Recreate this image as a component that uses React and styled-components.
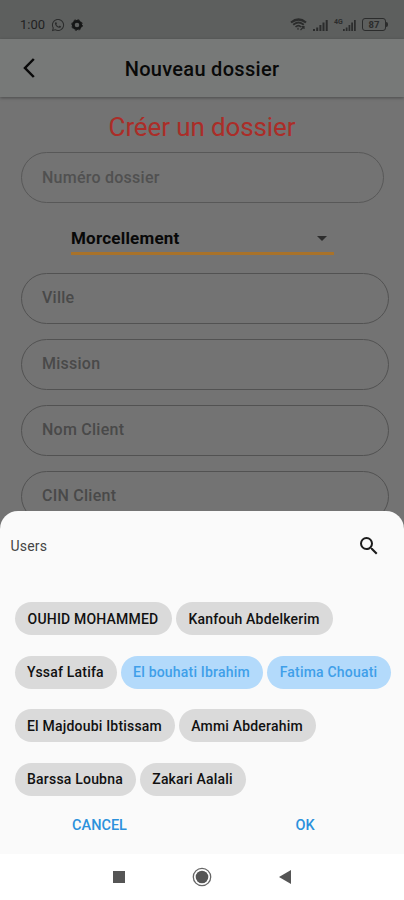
import React, { useState } from "react";
import styled, { createGlobalStyle, css } from "styled-components";
import { FaWhatsapp } from "react-icons/fa";
import { MdSearch } from "react-icons/md";

const fields = ["Ville", "Mission", "Nom Client", "CIN Client"];

/* users are laid out line by line in the sheet */
const userRows = [
  [
    { name: "OUHID MOHAMMED", width: 157 },
    { name: "Kanfouh Abdelkerim", width: 157 },
  ],
  [
    { name: "Yssaf Latifa", width: 102 },
    { name: "El bouhati Ibrahim", width: 142 },
    { name: "Fatima Chouati", width: 124 },
  ],
  [
    { name: "El Majdoubi Ibtissam", width: 160 },
    { name: "Ammi Abderahim", width: 137 },
  ],
  [
    { name: "Barssa Loubna", width: 121 },
    { name: "Zakari Aalali", width: 106 },
  ],
];

const GearIcon = () => (
  <svg width="12" height="12" viewBox="0 0 12 12" fill="none" stroke="#151616">
    <circle cx="6" cy="6" r="3.7" strokeWidth="2.8" />
    <circle cx="6" cy="6" r="5.3" strokeWidth="1" strokeDasharray="2.1 2.06" />
  </svg>
);

const SignalIcon = ({ width = 15 }) => (
  <svg
    width={width}
    height="12"
    viewBox="0 0 15 12"
    preserveAspectRatio="none"
    fill="#2b2c2c"
  >
    <path d="M0 10h2v2H0zM3.2 8.500h2V12h-2zM6.400 6h2v6h-2zM9.500 3.500h2V12h-2zM12.700 1h2v11h-2z" />
  </svg>
);

const WifiIcon = () => (
  <svg width="17" height="13" viewBox="0 0 17 13" fill="none" stroke="#2b2c2c">
    <path d="M1 4.500Q8.500-1.500 16 4.500" strokeWidth="2.200" />
    <path d="M3.200 6.800Q8.500 2.200 13.800 6.800" strokeWidth="1.900" />
    <path d="M5.500 9Q8.500 6.200 11 9" strokeWidth="1.700" />
    <path d="M8 11.800v-2M10.500 12l3.200-3.200M11.500 8.600H14V11" strokeWidth="1.200" />
  </svg>
);

const MyDossier = () => {
  const [selected, setSelected] = useState([
    "El bouhati Ibrahim",
    "Fatima Chouati",
  ]);

  /* add or remove a user from the selection */
  const toggleUser = (name) => {
    if (selected.includes(name)) {
      setSelected(selected.filter((user) => user !== name));
    } else {
      setSelected([...selected, name]);
    }
  };

  return (
    <Screen>
      <GlobalStyle />
      <StatusBar>
        <StatusGroup>
          <Clock>1:00</Clock>
          <FaWhatsapp size={14} />
          <GearIcon />
        </StatusGroup>
        <StatusGroup>
          <WifiIcon />
          <SignalIcon />
          <MobileSignal>
            <Network>4G</Network>
            <SignalIcon width={13} />
          </MobileSignal>
          <Battery>
            <BatteryBody>87</BatteryBody>
            <BatteryTip />
          </Battery>
        </StatusGroup>
      </StatusBar>
      <Header>
        <BackButton aria-label="Retour">
          <svg width="14" height="22" viewBox="0 0 14 22" fill="none">
            <path d="M11.800 2L3 11l8.800 9" stroke="#090909" strokeWidth="2.500" />
          </svg>
        </BackButton>
        <HeaderTitle>Nouveau dossier</HeaderTitle>
      </Header>
      <Form>
        <FormTitle>Créer un dossier</FormTitle>
        <Field $short>Numéro dossier</Field>
        <Select>
          Morcellement
          <svg width="10" height="5" viewBox="0 0 10 5" fill="#2d2d2d">
            <path d="M0 0h10L5 5z" />
          </svg>
        </Select>
        <FieldList>
          {fields.map((field) => (
            <Field key={field}>{field}</Field>
          ))}
        </FieldList>
      </Form>
      <Sheet>
        <SheetHeader>
          <SheetTitle>Users</SheetTitle>
          <MdSearch size={24} color="#1c1c1c" />
        </SheetHeader>
        <UserList>
          {userRows.map((row) => (
            <UserRow key={row[0].name}>
              {row.map((user) => (
                <Chip
                  key={user.name}
                  $width={user.width}
                  $selected={selected.includes(user.name)}
                  onClick={() => toggleUser(user.name)}
                >
                  {user.name}
                </Chip>
              ))}
            </UserRow>
          ))}
        </UserList>
        <Actions>
          <ActionButton>CANCEL</ActionButton>
          <ActionButton>OK</ActionButton>
        </Actions>
        <NavBar>
          <svg width="12" height="12" viewBox="0 0 12 12" fill="#555">
            <path d="M0 0h12v12H0z" />
          </svg>
          <svg width="20" height="20" viewBox="0 0 20 20">
            <circle cx="10" cy="10" r="8.700" fill="none" stroke="#666" strokeWidth="1.300" />
            <circle cx="10" cy="10" r="6.300" fill="#555" />
          </svg>
          <svg width="12" height="14" viewBox="0 0 12 14" fill="#555">
            <path d="M12 0v14L0 7z" />
          </svg>
        </NavBar>
      </Sheet>
    </Screen>
  );
};

export default MyDossier;

const GlobalStyle = createGlobalStyle`
  body {
    margin: 0;
    font-family: Roboto, "Liberation Sans", sans-serif;
  }

  * {
    box-sizing: border-box;
  }

  button {
    border: 0;
    padding: 0;
    background: none;
    font-family: inherit;
  }

  svg {
    display: block;
    flex-shrink: 0;
  }
`;

const Screen = styled.div`
  position: relative;
  width: 404px;
  height: 900px;
  overflow: hidden;
  background-color: #737373;
`;

const StatusBar = styled.div`
  display: flex;
  justify-content: space-between;
  height: 39px;
  padding: 10px 15px 0 20px;
  background-color: #5d5f5e;
  color: #2b2c2c;
`;

const StatusGroup = styled.div`
  display: flex;
  align-items: center;
  height: 29px;
  gap: 6px;
`;

const Clock = styled.span`
  width: 25px;
  font-size: 13px;
  color: #222;
  white-space: nowrap;
`;

const MobileSignal = styled.div`
  display: flex;
  align-items: flex-end;
  width: 22px;
`;

const Network = styled.span`
  width: 9px;
  height: 12px;
  font-size: 7px;
  line-height: 7px;
  font-weight: 700;
`;

const Battery = styled.div`
  display: flex;
  align-items: center;
  width: 27px;
`;

const BatteryBody = styled.div`
  width: 24px;
  height: 13px;
  border: 1.5px solid #2b2c2c;
  border-radius: 3px;
  text-align: center;
  font-size: 9.5px;
  line-height: 11px;
  font-weight: 700;
`;

const BatteryTip = styled.div`
  width: 2px;
  height: 5px;
  border-radius: 0 2px 2px 0;
  background-color: #2b2c2c;
`;

const Header = styled.header`
  position: relative;
  display: grid;
  grid-template-columns: 58px 1fr 58px;
  align-items: center;
  height: 58px;
  background-color: #777978;
  box-shadow: 0 1px 3px rgba(0, 0, 0, 0.35);
`;

const BackButton = styled.button`
  display: flex;
  padding-left: 22px;
`;

const HeaderTitle = styled.h1`
  margin: 1px 0 0;
  text-align: center;
  font-size: 20px;
  font-weight: 500;
  letter-spacing: 0.3px;
  color: #090909;
`;

const Form = styled.main`
  padding: 13px 15px 0 21px;
`;

const FormTitle = styled.h2`
  height: 34px;
  margin: 0 0 8px;
  padding-right: 6px;
  text-align: center;
  font-size: 26px;
  line-height: 34px;
  font-weight: 400;
  letter-spacing: -0.12px;
  color: #ab2d28;
`;

const Field = styled.div`
  display: flex;
  align-items: center;
  width: 368px;
  height: 51px;
  padding: 0 0 2px 20px;
  border: 1px solid #525252;
  border-radius: 26px;
  font-size: 16px;
  font-weight: 500;
  letter-spacing: 0.25px;
  color: #494949;

  ${({ $short }) =>
    $short &&
    css`
      width: 363px;
      padding-bottom: 1px;
      border-color: #585858;
      color: #505050;
    `}
`;

const Select = styled.div`
  display: flex;
  align-items: center;
  justify-content: space-between;
  width: 263px;
  height: 30px;
  margin: 22px 0 18px 50px;
  padding: 0 7px 1px 0;
  border-bottom: 3px solid #a8722a;
  font-size: 17px;
  font-weight: 700;
  letter-spacing: 0.22px;
  color: #080808;
`;

const FieldList = styled.div`
  display: grid;
  row-gap: 15px;
`;

const Sheet = styled.section`
  position: absolute;
  left: 0;
  bottom: 0;
  width: 404px;
  height: 389px;
  border-radius: 18px 18px 0 0;
  background-color: #fafafa;
`;

const SheetHeader = styled.div`
  display: flex;
  align-items: center;
  justify-content: space-between;
  height: 70px;
  padding: 0 23px 0 10.5px;
`;

const SheetTitle = styled.span`
  font-size: 14px;
  letter-spacing: 0.2px;
  color: #444;
`;

const UserList = styled.div`
  display: grid;
  row-gap: 20.5px;
  padding: 21px 0 0 15px;
`;

const UserRow = styled.div`
  display: flex;
  gap: 4px;
`;

const Chip = styled.button`
  width: ${({ $width }) => $width}px;
  height: 33px;
  padding-right: 1px;
  border-radius: 17px;
  background-color: ${({ $selected }) => ($selected ? "#b3dafb" : "#dadada")};
  color: ${({ $selected }) => ($selected ? "#3f9fe9" : "#111")};
  font-size: 14px;
  font-weight: 500;
  letter-spacing: 0.2px;
  white-space: nowrap;
`;

const Actions = styled.div`
  display: grid;
  grid-template-columns: 199px 212px;
  height: 58.5px;
`;

const ActionButton = styled.button`
  padding-top: 1px;
  font-size: 14.5px;
  font-weight: 500;
  color: #2b91dc;
`;

const NavBar = styled.nav`
  display: flex;
  align-items: center;
  justify-content: space-between;
  height: 46px;
  padding: 0 113px;
  background-color: #fff;
`;
